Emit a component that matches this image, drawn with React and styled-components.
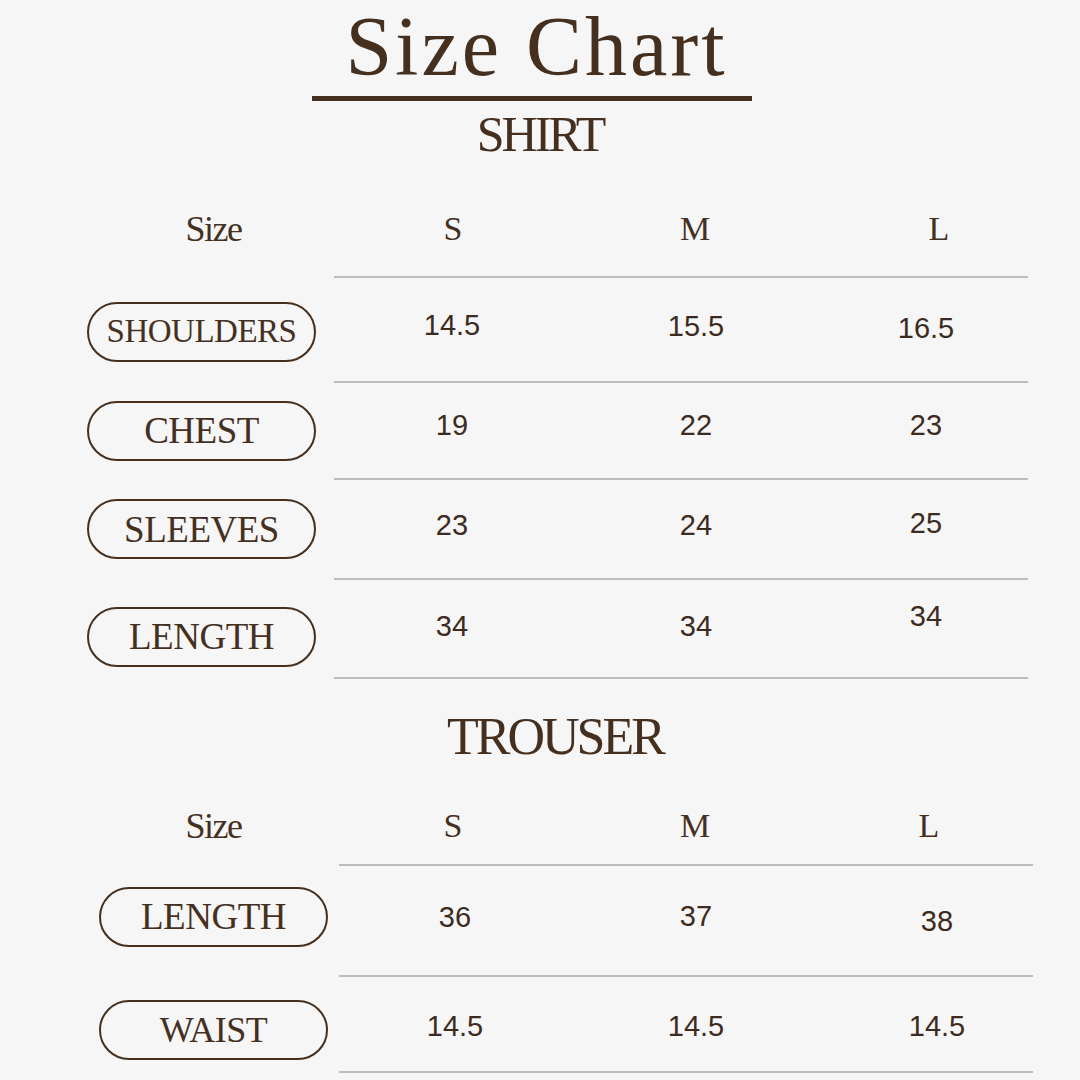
import React from 'react';
import styled, { createGlobalStyle } from 'styled-components';

const BROWN = '#45301f';
const LINE = '#bcbcbc';
const SERIF = "'Liberation Serif', 'DejaVu Serif', serif";
const SANS = "'Liberation Sans', Arial, sans-serif";

const GlobalStyle = createGlobalStyle`
  html, body {
    margin: 0;
    padding: 0;
    background: #f6f6f6;
  }
  body {
    width: 1080px;
    height: 1080px;
    overflow: hidden;
    font-family: ${SERIF};
    color: ${BROWN};
  }
`;

const Page = styled.div`
  width: 1080px;
  height: 1080px;
  display: flex;
  flex-direction: column;
  background: #f6f6f6;
`;

const Title = styled.h1`
  margin: 0 0 0 312px;
  width: 440px;
  text-align: center;
  font-family: ${SERIF};
  font-weight: 400;
  font-size: 84px;
  line-height: 93px;
  letter-spacing: 3px;
  padding-left: 9px;
  box-sizing: border-box;
  color: ${BROWN};
`;

const TitleBar = styled.div`
  margin: 3px 0 0 312px;
  width: 440px;
  height: 5px;
  background: ${BROWN};
`;

const SectionTitle = styled.h2`
  margin: ${p => p.$top}px 0 0 ${p => p.$center - 300}px;
  width: 600px;
  text-align: center;
  font-family: ${SERIF};
  font-weight: 400;
  font-size: ${p => p.$size}px;
  line-height: ${p => p.$size}px;
  letter-spacing: -3px;
  color: ${BROWN};
`;

const Table = styled.div`
  display: flex;
  flex-direction: column;
  margin: ${p => p.$top}px 0 0 ${p => p.$left}px;
`;

const Row = styled.div`
  display: grid;
  grid-template-columns: ${p => p.$cols};
  align-items: center;
  height: ${p => p.$h}px;
`;

const HeadLabel = styled.div`
  width: 229px;
  box-sizing: border-box;
  padding-left: ${p => p.$pad}px;
  text-align: center;
  font-size: 36px;
  line-height: 36px;
  letter-spacing: -1.5px;
`;

const HeadCell = styled.div`
  text-align: center;
  font-size: 34px;
  line-height: 34px;
`;

const Pill = styled.div`
  width: 229px;
  height: 60px;
  box-sizing: border-box;
  border: 2px solid ${BROWN};
  border-radius: 30px;
  display: flex;
  align-items: center;
  justify-content: center;
  font-family: ${SERIF};
  font-size: ${p => p.$size}px;
  line-height: 1;
  letter-spacing: -0.5px;
  color: ${BROWN};
  transform: translateY(${p => p.$dy || 0}px);
`;

const Value = styled.div`
  text-align: center;
  font-family: ${SANS};
  font-size: 29px;
  line-height: 29px;
  color: #3d2b1f;
  transform: translateY(${p => p.$dy || 0}px);
`;

const Divider = styled.div`
  margin: ${p => p.$top || 0}px 0 0 ${p => p.$left}px;
  width: 694px;
  height: 2px;
  background: ${LINE};
`;

const shirt = {
  left: 87,
  label: 247,
  headCols: '247px 238px 246px 242px',
  cols: '247px 236px 252px 208px',
  rows: [
    { name: 'SHOULDERS', size: 33, h: 103, dy: 2, vals: ['14.5', '15.5', '16.5'], vdy: [-4, -3, -1] },
    { name: 'CHEST', size: 37, h: 95, vals: ['19', '22', '23'], vdy: [-5, -5, -5] },
    { name: 'SLEEVES', size: 37, h: 98, vals: ['23', '24', '25'], vdy: [-4, -4, -6] },
    { name: 'LENGTH', size: 37, h: 97, dy: 8, vals: ['34', '34', '34'], vdy: [-2, -2, -12] },
  ],
};

const trouser = {
  left: 99,
  label: 240,
  headCols: '240px 228px 256px 212px',
  cols: '240px 232px 250px 232px',
  rows: [
    { name: 'LENGTH', size: 37, h: 109, dy: -4, vals: ['36', '37', '38'], vdy: [-3, -4, 1] },
    { name: 'WAIST', size: 36, h: 94, dy: 6, vals: ['14.5', '14.5', '14.5'], vdy: [2, 2, 2] },
  ],
};

const SizeTable = ({ data, top, headPad, headGap }) => (
  <Table $top={top} $left={data.left}>
    <Row $cols={data.headCols} $h={70}>
      <HeadLabel $pad={headPad}>Size</HeadLabel>
      <HeadCell>S</HeadCell>
      <HeadCell>M</HeadCell>
      <HeadCell>L</HeadCell>
    </Row>
    <Divider $left={data.label} $top={headGap} />
    {data.rows.map(r => (
      <React.Fragment key={r.name}>
        <Row $cols={data.cols} $h={r.h}>
          <Pill $size={r.size} $dy={r.dy}>{r.name}</Pill>
          {r.vals.map((v, i) => (
            <Value key={i} $dy={r.vdy[i]}>{v}</Value>
          ))}
        </Row>
        <Divider $left={data.label} />
      </React.Fragment>
    ))}
  </Table>
);

const App = () => (
  <Page>
    <GlobalStyle />
    <Title>Size Chart</Title>
    <TitleBar />
    <SectionTitle $top={8} $center={540} $size={50}>SHIRT</SectionTitle>
    <SizeTable data={shirt} top={35} headPad={24} headGap={12} />
    <SectionTitle $top={32} $center={555} $size={52}>TROUSER</SectionTitle>
    <SizeTable data={trouser} top={28} headPad={0} headGap={3} />
  </Page>
);

export default App;
